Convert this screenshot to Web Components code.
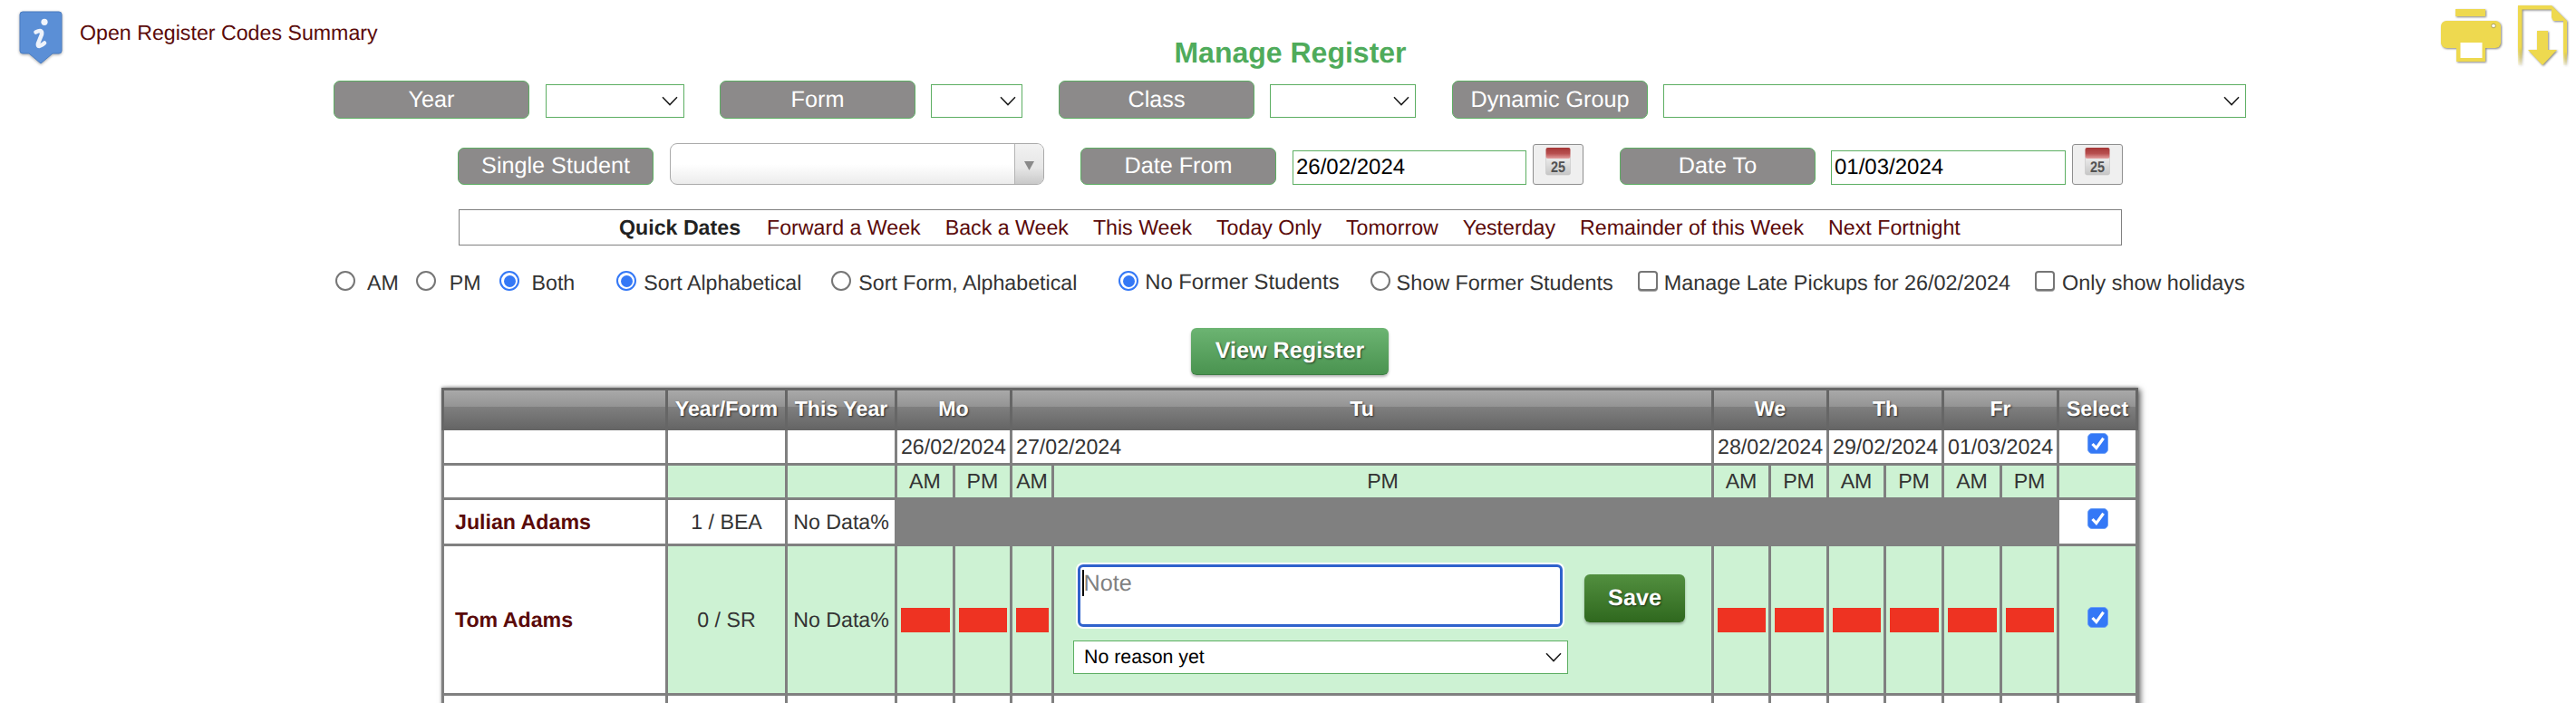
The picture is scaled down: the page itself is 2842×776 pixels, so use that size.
<!DOCTYPE html>
<html lang="en"><head><meta charset="utf-8"><title>Manage Register</title>
<style>
html,body{margin:0;padding:0;height:776px;overflow:hidden;background:#fff}
body{font:23.2px "Liberation Sans",Arial,sans-serif;color:#333;text-rendering:geometricPrecision}
</style></head>
<body>
<reg-topbar>
  <reg-info slot="left">Open Register Codes Summary</reg-info>
  <span slot="title">Manage Register</span>
</reg-topbar>
<reg-row h="42" mt="0" pl="368">
  <reg-label>Year</reg-label><reg-select w="153" style="margin-left:18px"></reg-select>
  <reg-label style="margin-left:39px">Form</reg-label><reg-select w="101" style="margin-left:17px"></reg-select>
  <reg-label style="margin-left:40px">Class</reg-label><reg-select w="161" style="margin-left:17px"></reg-select>
  <reg-label style="margin-left:40px">Dynamic Group</reg-label><reg-select w="643" style="margin-left:17px"></reg-select>
</reg-row>
<reg-row h="46" mt="27" pl="505">
  <reg-label short>Single Student</reg-label><reg-combo style="margin-left:18px"></reg-combo>
  <reg-label short style="margin-left:40px">Date From</reg-label><reg-date w="258" style="margin-left:18px">26/02/2024</reg-date><reg-cal style="margin-left:7px"></reg-cal>
  <reg-label short style="margin-left:40px">Date To</reg-label><reg-date w="259" style="margin-left:17px">01/03/2024</reg-date><reg-cal style="margin-left:7px"></reg-cal>
</reg-row>
<reg-quick>
  <b>Quick Dates</b>
  <reg-link>Forward a Week</reg-link><reg-link>Back a Week</reg-link><reg-link>This Week</reg-link><reg-link>Today Only</reg-link><reg-link>Tomorrow</reg-link><reg-link>Yesterday</reg-link><reg-link>Remainder of this Week</reg-link><reg-link>Next Fortnight</reg-link>
</reg-quick>
<reg-options>
  <reg-opt style="--g:13px">AM</reg-opt>
  <reg-opt style="margin-left:19px;--g:15px">PM</reg-opt>
  <reg-opt checked style="margin-left:20px;--g:14px">Both</reg-opt>
  <reg-opt checked style="margin-left:46px;--g:8px">Sort Alphabetical</reg-opt>
  <reg-opt style="margin-left:33px;--g:8px">Sort Form, Alphabetical</reg-opt>
  <reg-opt checked style="margin-left:46px;--g:7px;font-size:23.8px">No Former Students</reg-opt>
  <reg-opt style="margin-left:34px;--g:7px;font-size:23.4px">Show Former Students</reg-opt>
  <reg-opt box style="margin-left:27px;--g:7px;font-size:23.4px">Manage Late Pickups for 26/02/2024</reg-opt>
  <reg-opt box style="margin-left:27px;--g:8px;font-size:23.4px">Only show holidays</reg-opt>
</reg-options>
<reg-action>View Register</reg-action>
<reg-table></reg-table>
<script>
const GREEN='#5cae62';
function def(name,css,html,init){
  customElements.define(name,class extends HTMLElement{
    constructor(){super();const r=this.attachShadow({mode:'open'});
      const t=document.createElement('template');
      t.innerHTML='<style>'+css+'</style>'+(typeof html==='function'?html(this):html);
      r.appendChild(t.content.cloneNode(true));}
    connectedCallback(){if(init)init(this,this.shadowRoot);}
  });
}
const chevron='<svg width="18" height="11" viewBox="0 0 18 11" aria-hidden="true"><path d="M1 1.2 L9 9.6 L17 1.2" fill="none" stroke="#1c1c1c" stroke-width="1.5"/></svg>';
const check=s=>`<svg width="${s}" height="${s}" viewBox="0 0 23 23" aria-hidden="true"><rect x=".5" y=".5" width="22" height="22" rx="4.5" fill="#3478f6" stroke="#6da0f5"/><path d="M5.5 12 L9.8 16.6 L17.6 5.8" fill="none" stroke="#fff" stroke-width="3.2" stroke-linejoin="miter"/></svg>`;

def('reg-topbar',`
 :host{display:grid;grid-template-columns:1fr auto 1fr;height:89px}
 .t{padding:40px 0 0 5px;font:bold 32px/37px "Liberation Sans",Arial,sans-serif;color:#4fab5b}
 .r{display:flex;justify-content:flex-end;gap:19px;padding:6px 10px 0 0;align-items:flex-start}
 svg{filter:drop-shadow(1.5px 1.5px .8px rgba(80,80,80,.7));overflow:visible}
 .p{margin-top:4px}
`,`<div><slot name="left"></slot></div><div class="t"><slot name="title"></slot></div>
<div class="r">
 <svg class="p" width="66" height="58" viewBox="0 0 66 58" aria-hidden="true"><rect x="16" y="0" width="33" height="8" fill="#eed94f"/><rect x="0" y="13" width="66" height="30" rx="6" fill="#eed94f"/><rect x="17" y="33" width="32" height="25" fill="#eed94f"/><rect x="21.500" y="37" width="24" height="17" fill="#fff"/><circle cx="58" cy="18.500" r="2.300" fill="#fff" stroke="#9a8f40" stroke-width=".8"/></svg>
 <svg width="54" height="66" viewBox="0 0 54 66" aria-hidden="true"><defs><linearGradient id="f" x1="0" y1="0" x2="0" y2="1"><stop offset=".7" stop-color="#eed94f"/><stop offset="1" stop-color="#eed94f" stop-opacity=".1"/></linearGradient></defs><path d="M0 0 H4.500 V66 H0Z" fill="url(#f)"/><path d="M0 0 H37 V4.500 H0Z" fill="#eed94f"/><path d="M37 0 L54 17 H39 L37 13Z" fill="#eed94f"/><path d="M50 17 H54 V66 H50Z" fill="url(#f)"/><path d="M21 28 H33 V49 H43 L27 66 L11 49 H21Z" fill="#eed94f"/></svg>
</div>`);

def('reg-info',`
 :host{display:flex;align-items:flex-start;padding:12px 0 0 20px;color:#5a0a0a}
 svg{flex:none;overflow:visible;filter:drop-shadow(0 1px 1.5px rgba(0,0,0,.35))}
 span{margin:11px 0 0 18px;line-height:26px;white-space:nowrap}
`,`<svg width="50" height="60" viewBox="0 0 50 60" aria-hidden="true"><path d="M5 1 H45 Q48 1 48 4 V44 Q48 47 45 47 H38 L25 58 L12 47 H5 Q2 47 2 44 V4 Q2 1 5 1Z" fill="#5b8fd6" stroke="#4a7dc2"/><circle cx="29" cy="12.300" r="3.600" fill="#f2f6fc"/><path d="M19.500 23.500 Q27 19.500 26 26 L22 36 Q21 42 29 35.500" fill="none" stroke="#eef3fb" stroke-width="4.600" stroke-linecap="round"/></svg><span><slot></slot></span>`);

customElements.define('reg-row',class extends HTMLElement{
  constructor(){super();this.attachShadow({mode:'open'}).innerHTML=`<style>:host{display:flex;align-items:flex-end}</style><slot></slot>`;}
  connectedCallback(){this.style.height=this.getAttribute('h')+'px';this.style.marginTop=this.getAttribute('mt')+'px';this.style.paddingLeft=this.getAttribute('pl')+'px';}
});

def('reg-label',`
 :host{display:flex;box-sizing:border-box;width:216px;height:42px;align-items:center;justify-content:center;background:#8c8a8a;border:1.5px solid ${GREEN};border-radius:7px;color:#fff;font-size:25.2px;white-space:nowrap}
 :host([short]){height:41px}
`,`<slot></slot>`);

def('reg-select',`
 :host{display:flex;box-sizing:border-box;height:37px;margin-bottom:1px;align-items:center;justify-content:flex-end;background:#fff;border:1.5px solid ${GREEN};padding-right:6px;font-size:21.33px;color:#000}
`,chevron,(h)=>{h.style.width=h.getAttribute('w')+'px';});

def('reg-combo',`
 :host{display:flex;box-sizing:border-box;width:413px;height:46px;border:1.5px solid #aaa;border-radius:8px;overflow:hidden;background:linear-gradient(#fff 50%,#ececec)}
 .f{flex:1}
 .b{width:32px;border-left:1.5px solid #b4b4b4;background:linear-gradient(#f2f2f2,#e6e6e6 60%,#c9c9c9);display:flex;justify-content:center;padding-top:19px;box-sizing:border-box}
`,`<div class="f"></div><div class="b"><svg width="11" height="10" viewBox="0 0 11 10" aria-hidden="true"><path d="M0 0 H11 L5.500 10Z" fill="#8a8a8a"/></svg></div>`);

def('reg-date',`
 :host{display:flex;box-sizing:border-box;height:38px;align-items:center;padding-left:3px;background:#fff;border:1.5px solid ${GREEN};font-size:24px;color:#000;white-space:nowrap}
`,`<slot></slot>`,(h)=>{h.style.width=h.getAttribute('w')+'px';});

def('reg-cal',`
 :host{display:flex;box-sizing:border-box;width:56px;height:45px;justify-content:center;padding-top:3px;background:#efefef;border:1.5px solid #8f8f8f;border-radius:3px}
 svg{display:block}
`,`<svg width="28" height="31" viewBox="0 0 28 31" aria-hidden="true"><defs><linearGradient id="r" x1="0" y1="0" x2="0" y2="1"><stop offset="0" stop-color="#a53636"/><stop offset=".55" stop-color="#b85050"/><stop offset="1" stop-color="#e3a0a0"/></linearGradient><linearGradient id="b" x1="0" y1="0" x2="0" y2="1"><stop offset="0" stop-color="#f0f0f0"/><stop offset="1" stop-color="#c6c6c6"/></linearGradient></defs><rect x=".5" y="9" width="27" height="21" rx="2" fill="url(#b)" stroke="#c4c4c4" stroke-width=".6"/><rect x=".5" y="0" width="27" height="12" rx="2" fill="url(#r)"/><text x="14" y="27" text-anchor="middle" font-family="Liberation Sans Narrow,Liberation Sans,sans-serif" font-weight="bold" font-size="17" fill="#525252" textLength="16" lengthAdjust="spacingAndGlyphs">25</text></svg>`);

def('reg-quick',`
 :host{display:flex;box-sizing:border-box;width:1835px;height:40px;margin:27px 0 0 506px;padding-left:176px;border:1.5px solid #808080;align-items:center;gap:27px;white-space:nowrap;color:#222}
 ::slotted(b){margin-right:2px}
`,`<slot></slot>`);

def('reg-link',`:host{display:block;color:#5a0a0a}`,`<slot></slot>`);

def('reg-options',`:host{display:flex;height:24px;margin-top:29px;padding-left:370px;align-items:center;white-space:nowrap}`,`<slot></slot>`);

def('reg-opt',`
 :host{display:flex;align-items:center;color:#333}
 .m{flex:none;box-sizing:border-box;width:22px;height:22px;margin-right:var(--g,8px);margin-top:-5px;background:#fff;border:2px solid #767676;border-radius:50%}
 :host([checked]) .m{border:2px solid #3478f6;padding:2.5px;background:#3478f6 content-box}
 :host([box]) .m{border-radius:4px;box-shadow:0 1px 0 #aaa}
`,`<span class="m"></span><slot></slot>`);

def('reg-action',`
 :host{display:flex;box-sizing:border-box;width:218px;height:52px;margin:38px 0 0 1314px;align-items:center;justify-content:center;border-radius:6px;background:linear-gradient(#6cb472,#4a9350);border-bottom:1.5px solid #3d7d43;box-shadow:0 2px 3px rgba(0,0,0,.3);color:#fff;font-weight:bold;font-size:25.2px;text-shadow:1px 1px 2px rgba(0,0,0,.6)}
`,`<slot></slot>`);

def('reg-bar',`:host{display:block;height:27px;background:#ee3322;margin:0 3.5px}`,``);
def('reg-check',`:host{display:block;width:23px;height:23px;margin:0 auto} svg{display:block}`,check(23));
def('reg-chosen',`
 :host{display:flex;box-sizing:border-box;height:37px;align-items:center;justify-content:space-between;background:#fff;border:1.5px solid ${GREEN};padding:0 6px 0 11px;font-size:21.33px;color:#000;white-space:nowrap}
`,`<slot></slot>${chevron}`);
def('reg-note',`
 :host{display:flex;align-items:flex-start;box-sizing:border-box;width:535px;height:69px;margin:0 5px;padding:2px 0 0 2px;background:#fff;border:3px solid #2f62cc;border-radius:6px;box-shadow:0 0 0 2px #fff;font-size:25.2px;color:#808080;line-height:32px}
 i{flex:none;width:1.5px;height:29px;margin-top:1px;background:#000}
`,`<i></i><slot></slot>`);
def('reg-save',`
 :host{display:flex;box-sizing:border-box;width:111px;height:53px;margin-top:31px;align-items:center;justify-content:center;border-radius:6px;background:linear-gradient(#528f3f,#2f681e);box-shadow:0 2px 3px rgba(0,0,0,.3);color:#fff;font-weight:bold;font-size:25.2px;text-shadow:1px 1px 2px rgba(0,0,0,.6)}
`,`<slot></slot>`);

const W=[244,129,118,61,60,43,725,60,61,60,61,61,60,84];
const am=['AM','PM'];
function tableHtml(){
  const cols=W.map(w=>`<col style="width:${w}px">`).join('');
  const head=[['',1],['Year/Form',1],['This Year',1],['Mo',2],['Tu',2],['We',2],['Th',2],['Fr',2],['Select',1]]
    .map(([t,c])=>`<th colspan="${c}">${t}</th>`).join('');
  const dates=[['26/02/2024',2],['27/02/2024',2,'l'],['28/02/2024',2],['29/02/2024',2],['01/03/2024',2]]
    .map(([t,c,k])=>`<td colspan="${c}" class="${k||''}">${t}</td>`).join('');
  const ampm=[...am,'AM','PM',...am,...am,...am].map(t=>`<td class="g">${t}</td>`).join('');
  let bars='';
  for(let i=0;i<3;i++)bars+='<td class="g"><reg-bar></reg-bar></td>';
  bars+=`<td class="g"><div class="pm"><div class="col"><reg-note>Note</reg-note><reg-chosen>No reason yet</reg-chosen></div><reg-save>Save</reg-save></div></td>`;
  for(let i=0;i<6;i++)bars+='<td class="g"><reg-bar></reg-bar></td>';
  const empty=W.map(()=>'<td></td>').join('');
  return `<table><colgroup>${cols}</colgroup>
   <tr class="h">${head}</tr>
   <tr class="r1"><td></td><td></td><td></td>${dates}<td class="top"><reg-check></reg-check></td></tr>
   <tr class="r2"><td></td><td class="g"></td><td class="g"></td>${ampm}<td class="g"></td></tr>
   <tr class="r3"><td class="n">Julian Adams</td><td>1 / BEA</td><td>No Data%</td><td colspan="10" class="x"></td><td class="c3"><reg-check></reg-check></td></tr>
   <tr class="r4"><td class="n">Tom Adams</td><td class="g">0 / SR</td><td class="g">No Data%</td>${bars}<td class="g c4"><reg-check></reg-check></td></tr>
   <tr class="r5">${empty}</tr>
  </table>`;
}
def('reg-table',`
 :host{display:block;width:1872px;margin:14px 0 0 487px;box-shadow:3px 2px 6px rgba(0,0,0,.55),0 -1px 3px rgba(0,0,0,.25)}
 table{width:1872px;table-layout:fixed;border-collapse:separate;border-spacing:3px;background:#808080;font:23.2px "Liberation Sans",Arial,sans-serif;color:#333}
 td,th{box-sizing:border-box;padding:0;text-align:center;background:#fff;white-space:nowrap;overflow:hidden}
 th{height:41px;color:#fff;font-weight:bold;text-shadow:1px 1px 2px rgba(0,0,0,.65);background:linear-gradient(#a9a9a9,#949494 43%,#7f7f7f 44%,#676767);outline:3px solid #666}
 .r1 td{height:36px} .r2 td{height:35px} .r3 td{height:48px} .r4 td{height:162px} .r5 td{height:60px}
 td.l{text-align:left;padding-left:4px}
 td.g{background:#cdf2d3}
 td.n{text-align:left;padding-left:12px;font-weight:bold;color:#5a0a0a}
 td.x{background:#808080}
 td.top{vertical-align:top;padding-top:3px}
 td.c3 reg-check{margin-top:-8px}
 td.c4 reg-check{margin-top:-6px}
 .pm{display:flex;align-items:flex-start;gap:18px;padding:0 0 0 21px;height:162px;box-sizing:border-box}
 .col{display:flex;flex-direction:column;width:546px;padding-top:20px;gap:15px}
`,tableHtml());
</script>
</body></html>
